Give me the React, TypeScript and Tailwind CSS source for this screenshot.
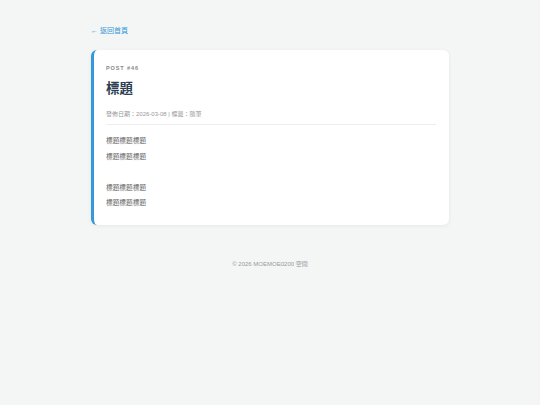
import React from 'react';

const lines = ['標題標題標題', '標題標題標題', '', '標題標題標題', '標題標題標題'];

export default function App() {
  return (
    <div
      className="min-h-[405px] bg-[#f4f5f5] pt-[25px]"
      style={{ fontFamily: '"Liberation Sans", "Noto Sans CJK TC", sans-serif' }}
    >
      <div className="w-[358px] mx-auto">
        {/* Back link */}
        <a href="#" className="block h-[12px] text-[7px] leading-[12px] text-[#3498db]">
          ← 返回首頁
        </a>

        {/* Post card */}
        <div className="mt-[13px] bg-white rounded-[6px] border-l-[3px] border-[#3498db] shadow-[0_1px_4px_rgba(0,0,0,0.06)] pl-[12px] pr-[13px] pt-[14px] pb-[14px]">
          <div className="text-[5.5px] leading-[8px] font-bold tracking-[0.9px] text-[#888] uppercase">
            Post #46
          </div>
          <h1 className="mt-[7px] text-[13.5px] leading-[20px] font-semibold text-[#2c3e50]">標題</h1>
          <div className="mt-[10px] text-[6px] leading-[10px] text-[#999]">
            發佈日期：2026-03-08 | 標籤：隨筆
          </div>
          <div className="mt-[5px] border-t border-[#eeeeee]" />
          <div className="mt-[8px] text-[6.7px] leading-[15.5px] text-[#666]">
            {lines.map((l, i) => (
              <div key={i} className="h-[15.5px]">
                {l}
              </div>
            ))}
          </div>
        </div>

        {/* Footer */}
        <div className="mt-[34px] text-center text-[6px] leading-[10px] text-[#999]">
          © 2026 MOEMOE0200 空間
        </div>
      </div>
    </div>
  );
}
